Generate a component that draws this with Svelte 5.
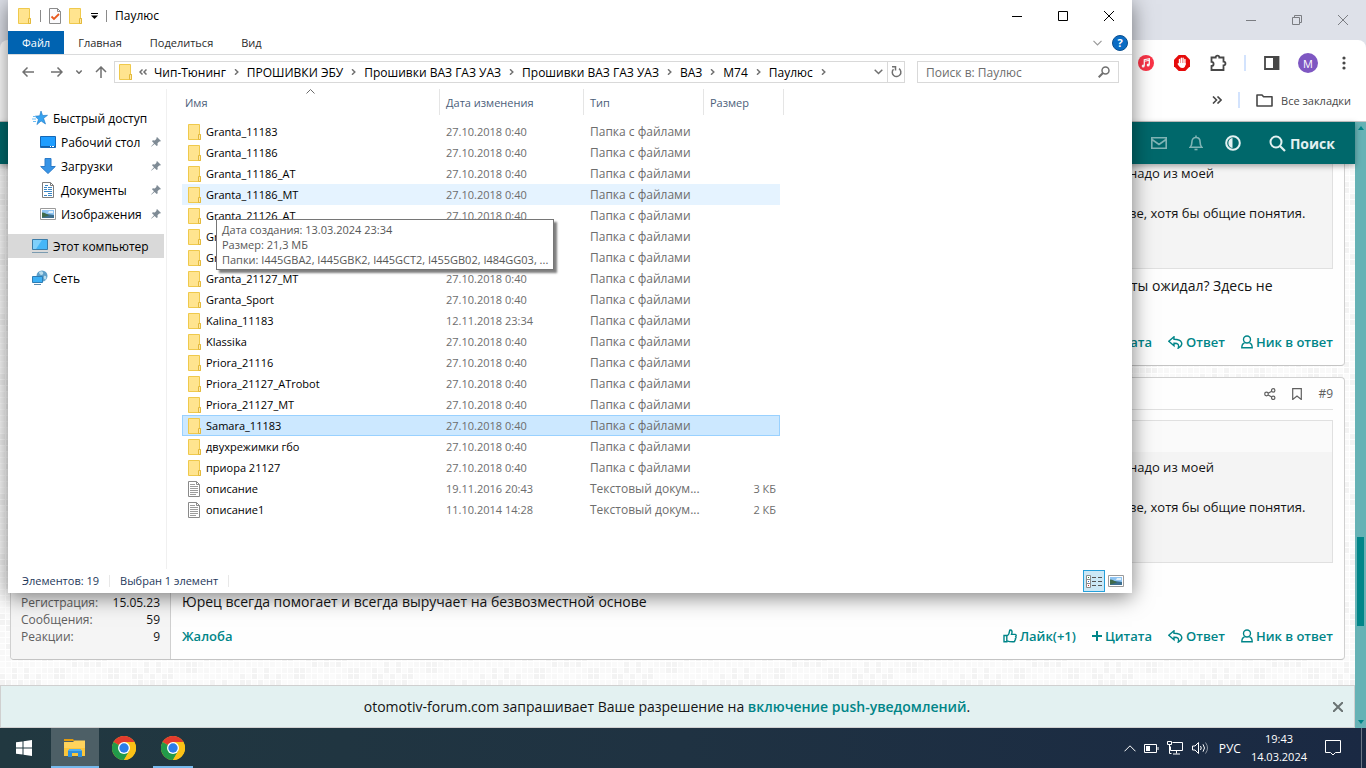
<script lang="ts">
	type Entry = { name: string; date: string; kind?: string; size?: string };

	const crumbs = ['Чип-Тюнинг', 'ПРОШИВКИ ЭБУ', 'Прошивки ВАЗ ГАЗ УАЗ', 'Прошивки ВАЗ ГАЗ УАЗ', 'ВАЗ', 'М74', 'Паулюс'];

	const places = [
		{ label: 'Рабочий стол', icon: 'desktop' },
		{ label: 'Загрузки', icon: 'download' },
		{ label: 'Документы', icon: 'document' },
		{ label: 'Изображения', icon: 'picture' }
	];

	const folders = [
		'Granta_11183',
		'Granta_11186',
		'Granta_11186_AT',
		'Granta_11186_MT',
		'Granta_21126_AT',
		'Granta_21126_MT',
		'Granta_21127_AT',
		'Granta_21127_MT',
		'Granta_Sport',
		'Kalina_11183',
		'Klassika',
		'Priora_21116',
		'Priora_21127_ATrobot',
		'Priora_21127_MT',
		'Samara_11183',
		'двухрежимки гбо',
		'приора 21127'
	];

	const entries: Entry[] = [
		...folders.map((name) => ({
			name,
			date: name === 'Kalina_11183' ? '12.11.2018 23:34' : '27.10.2018 0:40'
		})),
		{ name: 'описание', date: '19.11.2016 20:43', kind: 'Текстовый докум...', size: '3 КБ' },
		{ name: 'описание1', date: '11.10.2014 14:28', kind: 'Текстовый докум...', size: '2 КБ' }
	];

	let hovered = 'Granta_11186_MT';
	let selected = 'Samara_11183';

	// mosaic squares of the forum background
	const tiles: { x: number; y: number; fill: string }[] = [];
	const shades = ['#fafafa', '#f4f4f4', '#fbfbfb', '#f8f8f8', '#f3f3f3', '#fafafa', '#f9f9f9'];
	for (let row = 0; row < 10; row++) {
		for (let col = 0; col < 40; col++) {
			const n = (row * 17 + col * 31 + row * col * 7 + ((col * col) % 11)) % shades.length;
			tiles.push({ x: col * 6, y: row * 6, fill: shades[n] });
		}
	}
</script>

{#snippet folder()}
	<svg class="folder" width="14" height="16" viewBox="0 0 14 16" aria-hidden="true">
		<path d="M.5.5h11v10h1v5H.5z" fill="#ffe48f" stroke="#efc94c" />
		<path d="M10.5 15.5v-5h2v5z" fill="#ffe9a6" stroke="#e3b93c" />
	</svg>
{/snippet}

{#snippet textFile()}
	<svg class="folder" width="14" height="16" viewBox="0 0 14 16" aria-hidden="true">
		<path d="M.5.5h8l3 3v12H.5z" fill="#fff" stroke="#8a8a8a" />
		<path d="M8.500.5v3h3" fill="none" stroke="#8a8a8a" />
		<path d="M2 3.500h5M2 5.500h8M2 7.500h8M2 9.500h8M2 11.500h8M2 13.500h6" stroke="#9c9c9c" />
	</svg>
{/snippet}

{#snippet photo()}
	<svg width="16" height="12" viewBox="0 0 16 12" aria-hidden="true">
		<path d="M.5.5h15v11H.5z" fill="#fff" stroke="#9a9a9a" />
		<path d="M2 2h12v8H2z" fill="#8fc4f2" />
		<path d="M2 5l5 1 7 1v3H2z" fill="#3d6f8f" />
		<path d="M2 4.500c3 0 5 2 7 3l-7 2z" fill="#3f6b4b" />
		<path d="M9 3h4v2H8z" fill="#dff0fb" />
	</svg>
{/snippet}

{#snippet chrome()}
	<svg width="24" height="24" viewBox="0 0 24 24" aria-hidden="true">
		<circle cx="12" cy="12" r="12" fill="#fbc116" />
		<path d="M12 12L1.600 6A12 12 0 0 1 22.400 6z" fill="#e33b2e" />
		<path d="M1.600 6A12 12 0 0 0 12 24l5.200-9L12 12z" fill="#229a4a" />
		<path d="M12 6h10.400A12 12 0 0 1 12 24l5.200-9z" fill="#fbc116" />
		<circle cx="12" cy="12" r="6" fill="#fff" />
		<circle cx="12" cy="12" r="4.700" fill="#2b7de9" />
	</svg>
{/snippet}

{#snippet closeGlyph()}
	<svg width="10" height="10" viewBox="0 0 10 10" aria-hidden="true"><path d="M0 0l10 10M10 0L0 10" /></svg>
{/snippet}

{#snippet reply()}
	<svg width="15" height="13" viewBox="0 0 15 13" aria-hidden="true">
		<path d="M6 .8L.8 5.300 6 9.800V7.300c3.800-.1 5.400.8 4.200 4.900 3.200-1.800 4-4 3.300-5.800C12.600 4.200 10 3.400 6 3.300z" />
	</svg>
{/snippet}

{#snippet person()}
	<svg width="12" height="14" viewBox="0 0 12 14" aria-hidden="true">
		<circle cx="6" cy="4.500" r="3.500" />
		<path d="M3.500 8C1.500 8.600.8 10 .8 12.800h10.400C11.200 10 10.500 8.600 8.500 8" />
	</svg>
{/snippet}

{#snippet post(number: string, line1: string, line2: string)}
	<article class="post">
		<dl class="author">
			{#if number}
				<div><dt>Регистрация:</dt><dd>15.05.23</dd></div>
				<div><dt>Сообщения:</dt><dd>59</dd></div>
				<div><dt>Реакции:</dt><dd>9</dd></div>
			{/if}
		</dl>
		<div class="message">
			{#if number}
				<header>
					<button aria-label="Поделиться">
						<svg width="12" height="12" viewBox="0 0 12 12">
							<circle cx="2.500" cy="6" r="1.800" /><circle cx="9.200" cy="2.400" r="1.700" /><circle cx="9.200" cy="9.800" r="1.700" />
							<path d="M4.200 5.200l3.500-2M4.200 6.900l3.500 2" />
						</svg>
					</button>
					<button aria-label="Закладка">
						<svg width="10" height="12" viewBox="0 0 10 12"><path d="M.7.700h8.600v10.800L5 8 .7 11.500z" /></svg>
					</button>
					<a href="#post">{number}</a>
				</header>
			{/if}
			<blockquote>
				<p>надо из моей<br /><br />ве, хотя бы общие понятия.</p>
			</blockquote>
			<div class="text">
				<p class="tail">{line1}</p>
				<p>{line2}</p>
			</div>
			<footer>
				{#if number}
					<a class="report" href="#report">Жалоба</a>
					<a href="#like">
						<svg width="14" height="14" viewBox="0 0 14 14" aria-hidden="true">
							<path d="M1 6.500h2.800v6.300H1zM3.800 7c2-1.200 2.700-3 2.900-5.800 2-.8 3 1.200 1.800 4.200h3.700c1.300.4 1.200 1.700.5 2.200.6.8.4 1.600-.3 2 .3.900 0 1.500-.6 1.800.1 1-.4 1.400-1.400 1.400-3 .1-4.500-.2-6.600-1" />
						</svg>
						Лайк(+1)
					</a>
				{/if}
				<a class="quote" href="#quote">
					<svg width="10" height="10" viewBox="0 0 10 10" aria-hidden="true"><path d="M5 0v10M0 5h10" /></svg>
					Цитата
				</a>
				<a href="#reply">{@render reply()}Ответ</a>
				<a href="#nick">{@render person()}Ник в ответ</a>
			</footer>
		</div>
	</article>
{/snippet}

<div class="screen">
	<main class="browser">
		<div class="frame">
			<button aria-label="Свернуть"><svg width="10" height="10" viewBox="0 0 10 10"><path d="M0 5.500h10" /></svg></button>
			<button aria-label="Восстановить">
				<svg width="10" height="10" viewBox="0 0 10 10"><path d="M.5 2.500h7v7h-7zM2.500 2.500v-2h7v7h-2" /></svg>
			</button>
			<button aria-label="Закрыть">{@render closeGlyph()}</button>
		</div>
		<div class="toolbar">
			<button aria-label="Музыка">
				<svg width="16" height="16" viewBox="0 0 16 16">
					<circle cx="8" cy="8" r="8" fill="#fb3447" />
					<path d="M6.300 10.800V4.700l5-1v6" fill="none" stroke="#fff" stroke-width="1.300" />
					<path d="M6.300 6.300l5-1" stroke="#fff" />
					<circle cx="5.200" cy="11" r="1.500" fill="#fff" /><circle cx="10.200" cy="10" r="1.500" fill="#fff" />
				</svg>
			</button>
			<button aria-label="Блокировка рекламы">
				<svg width="16" height="16" viewBox="0 0 16 16">
					<path d="M4.700 0h6.600L16 4.700v6.600L11.300 16H4.700L0 11.300V4.700z" fill="#e60b0b" />
					<path d="M5.500 4.500v4M7.300 3.200v5M9.100 3.200v5M10.900 4.500v5" stroke="#fff" stroke-width="1.400" stroke-linecap="round" />
					<path d="M4.800 8h6.800c.2 3-1 5-3.200 5-2.500 0-3.400-1.500-5-4.200z" fill="#fff" />
				</svg>
			</button>
			<button aria-label="Расширения">
				<svg width="18" height="18" viewBox="0 0 18 18" fill="none" stroke="#474747" stroke-width="1.800">
					<path d="M2.500 3.500h4.200c0-2.400 3.600-2.400 3.600 0h4.200v4.200c2.600 0 2.600 3.600 0 3.600v4.700h-12v-4c2.800-.2 2.800-4 0-4.200z" />
				</svg>
			</button>
			<span class="rule"></span>
			<button aria-label="Боковая панель">
				<svg width="16" height="14" viewBox="0 0 16 14">
					<path d="M1 1h13.500v12H1z" fill="#fff" stroke="#474747" stroke-width="1.800" /><path d="M9 1h6v12H9z" fill="#474747" />
				</svg>
			</button>
			<button class="avatar" aria-label="Профиль">М</button>
			<button aria-label="Меню">
				<svg width="4" height="14" viewBox="0 0 4 14" fill="#474747">
					<circle cx="2" cy="2" r="1.600" /><circle cx="2" cy="7" r="1.600" /><circle cx="2" cy="12" r="1.600" />
				</svg>
			</button>
		</div>
		<div class="bookmarks">
			<svg width="10" height="8" viewBox="0 0 10 8" fill="none" stroke="#474747" stroke-width="1.600"><path d="M1 .5L4.500 4 1 7.500M5.500.5L9 4 5.500 7.500" /></svg>
			<span class="rule"></span>
			<button>
				<svg width="17" height="13" viewBox="0 0 17 13" fill="none" stroke="#474747" stroke-width="1.600">
					<path d="M1 1h5l1.600 1.800H16V12H1z" stroke-linejoin="round" />
				</svg>
				Все закладки
			</button>
		</div>

		<div class="viewport">
			<div class="site">
				<nav>
					<a href="#mail" aria-label="Почта">
						<svg width="16" height="12" viewBox="0 0 16 12"><path d="M.8.8h14.400v10.400H.8zM1 2.500l7 5 7-5" /></svg>
					</a>
					<a href="#alerts" aria-label="Уведомления">
						<svg width="14" height="16" viewBox="0 0 14 16">
							<path d="M7 .5v2M1.200 12.200c1.500-1.500 1.700-3 1.700-5.200C2.900 4.200 4.500 2.500 7 2.500S11.100 4.200 11.100 7c0 2.200.2 3.700 1.700 5.200z" />
							<path d="M5.500 14.500h3" />
						</svg>
					</a>
					<a class="bright" href="#theme" aria-label="Тема">
						<svg width="16" height="16" viewBox="0 0 16 16"><circle cx="8" cy="8" r="6.800" stroke-width="2" /><path d="M7.500 3v10C2 12.500 2 3.500 7.500 3z" fill="#e3f1f1" stroke="none" /></svg>
					</a>
					<a class="bright find" href="#search">
						<svg width="17" height="17" viewBox="0 0 17 17"><circle cx="7" cy="7" r="5.500" stroke-width="2" /><path d="M11 11l5 5" stroke-width="2.200" /></svg>
						Поиск
					</a>
				</nav>

				<section class="topic">
					<svg class="mosaic" width="100%" height="100%" aria-hidden="true">
						<defs>
							<pattern id="mosaic" width="240" height="60" patternUnits="userSpaceOnUse">
								{#each tiles as tile}
									<rect x={tile.x} y={tile.y} width="5" height="5" fill={tile.fill} />
								{/each}
							</pattern>
						</defs>
						<rect width="100%" height="100%" fill="url(#mosaic)" />
					</svg>
					{@render post('', 'ты ожидал? Здесь не', '')}
					{@render post('#9', '', 'Юрец всегда помогает и всегда выручает на безвозместной основе')}
				</section>

				<div class="notice">
					<p>otomotiv-forum.com запрашивает Ваше разрешение на <a href="#push">включение push-уведомлений</a>.</p>
					<button aria-label="Закрыть">{@render closeGlyph()}</button>
				</div>
			</div>
			<div class="scrollbar">
				<svg width="6" height="4" viewBox="0 0 6 4"><path d="M0 4l3-4 3 4z" fill="#008588" /></svg>
				<span class="thumb"></span>
				<svg width="6" height="4" viewBox="0 0 6 4"><path d="M0 0l3 4 3-4z" fill="#008588" /></svg>
			</div>
		</div>
	</main>

	<div class="explorer">
		<div class="title">
			{@render folder()}
			<span class="bar"></span>
			<svg width="12" height="16" viewBox="0 0 12 16">
				<path d="M.5.5h8l3 3v12H.5z" fill="#fbfbfd" stroke="#8b8b8b" /><path d="M8.500.5v3h3" fill="none" stroke="#8b8b8b" />
				<path d="M2.500 8.500L5 11l5-5" fill="none" stroke="#e8591f" stroke-width="1.800" />
			</svg>
			{@render folder()}
			<svg width="7" height="6" viewBox="0 0 7 6"><path d="M0 .5h7" stroke="#000" /><path d="M0 2.500h7L3.500 6z" /></svg>
			<span class="bar"></span>
			<h1>Паулюс</h1>
			<div class="controls">
				<button aria-label="Свернуть"><svg width="10" height="10" viewBox="0 0 10 10"><path d="M0 5.500h10" /></svg></button>
				<button aria-label="Развернуть"><svg width="10" height="10" viewBox="0 0 10 10"><path d="M.5.5h9v9h-9z" /></svg></button>
				<button aria-label="Закрыть">{@render closeGlyph()}</button>
			</div>
		</div>

		<div class="ribbon">
			<button class="file">Файл</button>
			<button>Главная</button>
			<button>Поделиться</button>
			<button>Вид</button>
			<div class="help">
				<svg width="9" height="6" viewBox="0 0 9 6" fill="none" stroke="#9a9a9a" stroke-width="1.200"><path d="M.5.8l4 4 4-4" /></svg>
				<button aria-label="Справка">?</button>
			</div>
		</div>

		<div class="path">
			<div class="arrows">
				<button aria-label="Назад"><svg width="12" height="10" viewBox="0 0 12 10"><path d="M12 5H1M5.500.5L1 5l4.500 4.500" /></svg></button>
				<button aria-label="Вперед"><svg width="12" height="10" viewBox="0 0 12 10"><path d="M0 5h11M6.500.5L11 5 6.500 9.500" /></svg></button>
				<button aria-label="Последние"><svg width="6" height="4" viewBox="0 0 6 4"><path d="M.3.500L3 3.300 5.700.500" /></svg></button>
				<button aria-label="Вверх"><svg width="12" height="12" viewBox="0 0 12 12"><path d="M6 12V1M1 6l5-5 5 5" /></svg></button>
			</div>
			<div class="address">
				{@render folder()}
				<svg class="back" width="8" height="6" viewBox="0 0 8 6"><path d="M3.500.5L1 3l2.500 2.500M7.500.5L5 3l2.500 2.500" /></svg>
				{#each crumbs as crumb}
					<button>{crumb}</button>
					<svg class="sep" width="5" height="6" viewBox="0 0 5 6"><path d="M1 .3L3.800 3 1 5.700" /></svg>
				{/each}
				<button class="drop" aria-label="Предыдущие"><svg width="9" height="6" viewBox="0 0 9 6"><path d="M.7.700l3.800 3.800L8.300.7" /></svg></button>
				<button class="refresh" aria-label="Обновить">
					<svg width="11" height="12" viewBox="0 0 11 12"><path d="M8 2.700A4.300 4.300 0 1 1 2.500 3.200M1 .8h3.500v3.700" /></svg>
				</button>
			</div>
			<label class="search">
				<input type="text" placeholder="Поиск в: Паулюс" aria-label="Поиск в: Паулюс" />
				<svg width="12" height="12" viewBox="0 0 12 12"><circle cx="7.500" cy="4.500" r="3.500" /><path d="M5 7L.7 11.300" stroke-width="2" /></svg>
			</label>
		</div>

		<div class="content">
			<nav class="places">
				<a href="#quick">
					<svg width="16" height="16" viewBox="0 0 16 16">
						<path d="M9 1l1.600 4.500 4.900-.2-3.900 3 1.900 5.700-4.400-3-4.200 3.600 1.500-5L3 6.200l4.700-.4z" fill="#37a3f0" stroke="#1976c4" stroke-width=".6" />
						<path d="M1 6.500h3M0 9h4M1 11.500h3" stroke="#6cbcf3" />
					</svg>
					Быстрый доступ
				</a>
				{#each places as place}
					<a class="child" href="#{place.icon}">
						{#if place.icon === 'desktop'}
							<svg width="16" height="12" viewBox="0 0 16 12"><path d="M.5.5h15v11H.5z" fill="#1e9dff" stroke="#1567b5" /><path d="M1 10.500h14" stroke="#1660a8" /><path d="M10 10.500h1M12 10.500h2" stroke="#fff" /></svg>
						{:else if place.icon === 'download'}
							<svg width="16" height="16" viewBox="0 0 16 16"><path d="M5 .5h6v8h4.300L8 15.500.7 8.500H5z" fill="#3794e6" stroke="#2b7bc9" /></svg>
						{:else if place.icon === 'document'}
							<svg width="16" height="16" viewBox="0 0 16 16">
								<path d="M2.500.5h8l3 3v12h-11z" fill="#fff" stroke="#7d7d7d" /><path d="M10.500.5v3h3" fill="none" stroke="#7d7d7d" />
								<path d="M4 5.500h3M8 5.500h4M4 7.500h3M8 7.500h4M4 9.500h8M4 13.500h3M8 11.500h4M8 13.500h4" stroke="#3b86c4" /><path d="M5 3.500h3" stroke="#3b86c4" />
							</svg>
						{:else}
							{@render photo()}
						{/if}
						{place.label}
						<svg class="pin" width="10" height="10" viewBox="0 0 10 10">
							<path d="M6 0l4 4-1 .6-.8-.1-1.700 1.700.2 2L5.700 9 3.600 6.900.6 9.600 0 9.400 3 6.300 1 4.300l.8-1 2 .2L5.500 1.800 5.400 1z" fill="#7f8b95" />
						</svg>
					</a>
				{/each}
				<a class="group current" href="#computer">
					<svg width="16" height="15" viewBox="0 0 16 15"><path d="M.5.5h15v10H.5z" fill="#45b6f7" stroke="#3b7ca8" /><path d="M1 1h9L4 10H1z" fill="#7fd0fb" /><path d="M0 13.500h16" stroke="#7b9bb0" /></svg>
					Этот компьютер
				</a>
				<a class="group" href="#network">
					<svg width="16" height="16" viewBox="0 0 16 16">
						<circle cx="10" cy="6" r="5.500" fill="#5d9fc9" /><path d="M7 2c3-2 5 0 4 2S7 5 7 2zM12 6c2-1 3 1 2 3s-3-1-2-3z" fill="#b9dcec" />
						<path d="M.5 6.500h10v6H.5z" fill="#3cb0f5" stroke="#2e7db3" /><path d="M2 14.500h7" stroke="#5a8caf" />
					</svg>
					Сеть
				</a>
			</nav>

			<div class="files">
				<table>
					<thead>
						<tr>
							<th class="name">
								Имя
								<svg width="9" height="5" viewBox="0 0 9 5"><path d="M.5 4.500l4-4 4 4" fill="none" stroke="#6b6b6b" /></svg>
							</th>
							<th class="date">Дата изменения</th>
							<th class="kind">Тип</th>
							<th class="size">Размер</th>
						</tr>
					</thead>
					<tbody>
						{#each entries as entry}
							<tr class:hovered={entry.name === hovered} class:selected={entry.name === selected}>
								<td>
									<div class="cell">
										{#if entry.kind}{@render textFile()}{:else}{@render folder()}{/if}
										{entry.name}
									</div>
								</td>
								<td>{entry.date}</td>
								<td class="type">{entry.kind ?? 'Папка с файлами'}</td>
								<td>{entry.size ?? ''}</td>
							</tr>
						{/each}
					</tbody>
				</table>
				<div class="tooltip" role="tooltip">
					Дата создания: 13.03.2024 23:34<br />
					Размер: 21,3 МБ<br />
					Папки: I445GBA2, I445GBK2, I445GCT2, I455GB02, I484GG03, ...
				</div>
			</div>
		</div>

		<div class="status">
			<span>Элементов: 19</span>
			<span>Выбран 1 элемент</span>
			<div class="views">
				<button class="on" aria-label="Таблица">
					<svg width="16" height="13" viewBox="0 0 16 13" fill="none" stroke="#8a8a8a">
						<path d="M.5.5h4v12h-4zM.5 4.500h4M.5 8.500h4" fill="#fff" /><path d="M6 2.500h4M12 2.500h4M6 6.500h4M12 6.500h4M6 10.500h4M12 10.500h4" stroke="#555" />
						<path d="M2 2.500h1" stroke="#2a8a3c" /><path d="M2 6.500h1" stroke="#2a6fd0" /><path d="M2 10.500h1" stroke="#d02a2a" />
					</svg>
				</button>
				<button aria-label="Эскизы">{@render photo()}</button>
			</div>
		</div>
	</div>

	<div class="taskbar">
		<button class="start" aria-label="Пуск">
			<svg width="16" height="16" viewBox="0 0 16 16" fill="#fff"><path d="M0 2.300L6.500 1.400v6.100H0zM7.500 1.200L16 0v7.500H7.500zM0 8.500h6.500v6.100L0 13.700zM7.500 8.500H16V16l-8.500-1.200z" /></svg>
		</button>
		<button class="app active" aria-label="Проводник">
			<svg width="22" height="18" viewBox="0 0 22 18">
				<path d="M0 0h9l1.500 2H0z" fill="#e39b0c" /><path d="M0 3h9l1.500-1.500H21V17H0z" fill="#ffd35c" /><path d="M0 9h21v8H0z" fill="#fcc63a" />
				<path d="M4 18v-6l1.500-2h10.500l2 2v6h-4v-4H8v4z" fill="#2f8fdc" /><path d="M4 12h14l-2-2H5.500z" fill="#52b0f0" />
			</svg>
		</button>
		<button class="app" aria-label="Chrome">{@render chrome()}</button>
		<button class="app open" aria-label="Chrome">{@render chrome()}</button>
		<div class="tray">
			<svg width="12" height="7" viewBox="0 0 12 7"><path d="M.5 6.300L6 .8l5.500 5.500" /></svg>
			<svg width="15" height="9" viewBox="0 0 15 9"><path d="M.5.5h12v8H.5zM14 3v3" /><path d="M2 2h4v5H2z" fill="#fff" stroke="none" /></svg>
			<svg width="17" height="14" viewBox="0 0 17 14"><path d="M5.500 1.500h10v8h-12v-4M9.500 9.500v3M6 13h7M.5.5h4v3h-4zM2.500 3.500v9h2" /></svg>
			<svg width="17" height="14" viewBox="0 0 17 14"><path d="M.5 5h2.500l3.500-3.500v11L3 9H.500zM8.500 5q1.500 2 0 4M11 3.300q3 3.700 0 7.400" /><path d="M13.500 1.500q4 5.500 0 11" opacity=".5" /></svg>
			<span class="lang">РУС</span>
			<time>19:43<br />14.03.2024</time>
			<button aria-label="Уведомления">
				<svg width="16" height="16" viewBox="0 0 16 16"><path d="M.5.500h15v12h-5L8 15l-2.500-2.500h-5z" /></svg>
			</button>
		</div>
	</div>
</div>

<style>
	:global(body) {
		margin: 0;
	}
	.screen {
		position: relative;
		display: flex;
		flex-direction: column;
		height: 100vh;
		overflow: hidden;
		font-family: 'Open Sans', 'Noto Sans', sans-serif;
		font-size: 12px;
		color: #000;
	}
	button {
		display: flex;
		align-items: center;
		justify-content: center;
		margin: 0;
		padding: 0;
		border: 0;
		background: none;
		font: inherit;
		color: inherit;
	}
	a {
		color: inherit;
		text-decoration: none;
	}
	p,
	dl,
	dd,
	blockquote,
	h1 {
		margin: 0;
	}
	svg {
		flex-shrink: 0;
	}

	/* browser */
	.browser {
		flex: 1;
		min-height: 0;
		display: flex;
		flex-direction: column;
		background: #dee1e9;
	}
	.frame {
		display: flex;
		justify-content: flex-end;
		height: 40px;
	}
	.frame button {
		width: 46px;
		fill: none;
		stroke: #7b7d82;
	}
	.toolbar {
		display: flex;
		align-items: center;
		justify-content: flex-end;
		gap: 12px;
		height: 46px;
		padding-right: 10px;
		background: #fff;
		border-radius: 8px 8px 0 0;
	}
	.toolbar button {
		width: 24px;
		height: 24px;
	}
	.rule {
		width: 2px;
		height: 16px;
		margin: 0 2px;
		background: #d3e3fd;
	}
	.toolbar .avatar {
		width: 20px;
		height: 20px;
		margin: 0 2px;
		border-radius: 50%;
		background: #7e57c2;
		color: #fff;
		font-size: 11px;
	}
	.bookmarks {
		display: flex;
		align-items: center;
		justify-content: flex-end;
		gap: 14px;
		height: 28px;
		padding: 0 15px 7px 0;
		border-bottom: 1px solid #c8c8c8;
		background: #fff;
		color: #474747;
		font-size: 11px;
	}
	.bookmarks button {
		gap: 8px;
	}
	.viewport {
		flex: 1;
		min-height: 0;
		display: flex;
		background: #fff;
	}
	.scrollbar {
		display: flex;
		flex-direction: column;
		align-items: center;
		width: 11px;
		padding: 4px 0;
		box-sizing: border-box;
		background: #66b2b5;
	}
	.thumb {
		width: 7px;
		height: 89px;
		margin: auto 0 94px;
		background: #008588;
	}

	/* forum */
	.site {
		flex: 1;
		min-width: 0;
		display: flex;
		flex-direction: column;
		font-size: 14px;
		color: #141414;
	}
	.site nav {
		position: relative;
		z-index: 1;
		display: flex;
		align-items: center;
		justify-content: flex-end;
		gap: 22px;
		height: 42px;
		padding-right: 20px;
		background: #00686b;
		box-shadow: 0 2px 6px rgba(0, 0, 0, 0.35);
		fill: none;
		stroke: #80b4b5;
		stroke-width: 1.6;
	}
	.site nav a {
		display: flex;
		align-items: center;
	}
	.site nav .bright {
		stroke: #e3f1f1;
	}
	.find {
		gap: 4px;
		margin-left: 6px;
		font-weight: bold;
		color: #e3f1f1;
	}
	.topic {
		position: relative;
		flex: 1;
		min-height: 0;
		display: flex;
		flex-direction: column;
		justify-content: flex-end;
		gap: 11px;
		padding: 0 10px 25px;
		overflow: hidden;
	}
	.mosaic {
		position: absolute;
		inset: 0;
	}
	.post {
		position: relative;
		flex-shrink: 0;
		display: flex;
		border: 1px solid #d0d0d0;
		border-bottom-color: #c4c4c4;
		border-radius: 4px;
		background: #fefefe;
	}
	.author {
		display: flex;
		flex-direction: column;
		justify-content: flex-end;
		width: 139px;
		padding: 0 10px 14px;
		border-right: 1px solid #d0d0d0;
		border-radius: 4px 0 0 4px;
		background: #f5f5f5;
		font-size: 12px;
		line-height: 17px;
	}
	.author div {
		display: flex;
		justify-content: space-between;
	}
	.author dt {
		color: #606060;
	}
	.message {
		flex: 1;
		padding: 0 11px 12px;
	}
	.message header {
		display: flex;
		align-items: center;
		justify-content: flex-end;
		gap: 16px;
		height: 31px;
		border-bottom: 1px solid #e0e0e0;
		font-size: 12px;
		color: #606060;
		fill: none;
		stroke: #606060;
		stroke-width: 1.2;
	}
	blockquote {
		margin-top: 10px;
		padding-bottom: 45px;
		border: 1px solid #e0e0e0;
		background: #f4f4f4;
		font-size: 13px;
		line-height: 20px;
	}
	blockquote::before {
		content: '';
		display: block;
		height: 31px;
		margin-bottom: 5px;
		background: #fafafa;
	}
	blockquote p {
		width: 203px;
		margin-left: auto;
		white-space: nowrap;
	}
	.text {
		margin-top: 6px;
		line-height: 22px;
	}
	.text p {
		height: 22px;
	}
	.text .tail {
		width: 202px;
		margin-left: auto;
		white-space: nowrap;
	}
	.message footer {
		display: flex;
		align-items: center;
		justify-content: flex-end;
		gap: 16px;
		margin-top: 12px;
		line-height: 22px;
		font-size: 13px;
		font-weight: 600;
		color: #008588;
	}
	.message footer a {
		display: flex;
		align-items: center;
		gap: 3px;
		fill: none;
		stroke: #008588;
		stroke-width: 1.4;
	}
	.message footer .report {
		margin-right: auto;
	}
	.message footer .quote {
		stroke-width: 2;
	}
	.notice {
		display: flex;
		align-items: center;
		height: 41px;
		border: 1px solid #d0d0d0;
		background: #e3f1f1;
	}
	.notice p {
		flex: 1;
		text-align: center;
	}
	.notice a {
		font-weight: 600;
		color: #008588;
	}
	.notice button {
		margin-right: 11px;
		stroke: #6a7373;
		stroke-width: 2;
	}

	/* explorer */
	.explorer {
		position: absolute;
		z-index: 2;
		inset: 0 234px 175px 8px;
		display: flex;
		flex-direction: column;
		background: #fff;
		box-shadow: 0 4px 20px rgba(0, 0, 0, 0.5);
		white-space: nowrap;
	}
	.title {
		display: flex;
		align-items: center;
		gap: 8px;
		height: 31px;
		padding-left: 10px;
	}
	.bar {
		width: 1px;
		height: 12px;
		background: #8a8a8a;
	}
	.title h1 {
		font-size: 12px;
		font-weight: normal;
	}
	.controls {
		display: flex;
		margin-left: auto;
		height: 100%;
	}
	.controls button {
		width: 46px;
		fill: none;
		stroke: #000;
	}
	.ribbon {
		display: flex;
		height: 23px;
		border-bottom: 1px solid #dadbdc;
		color: #2b2b2b;
		font-size: 11px;
	}
	.ribbon > button {
		padding: 0 14px;
	}
	.ribbon .file {
		background: #0063b1;
		color: #fff;
	}
	.help {
		display: flex;
		align-items: center;
		gap: 10px;
		margin-left: auto;
		padding-right: 4px;
	}
	.help button {
		width: 16px;
		height: 16px;
		box-sizing: border-box;
		border: 1px solid #0a4f8f;
		border-radius: 50%;
		background: #0a6cc4;
		color: #fff;
		font-weight: bold;
	}
	.path {
		display: flex;
		align-items: center;
		gap: 12px;
		height: 34px;
		padding: 0 13px 0 14px;
	}
	.path svg {
		fill: none;
		stroke: #707070;
		stroke-width: 1.5;
	}
	.path .folder {
		stroke-width: 1;
	}
	.arrows {
		display: flex;
		align-items: center;
		gap: 13px;
		width: 80px;
	}
	.arrows button:first-child {
		margin-right: 4px;
	}
	.address,
	.search {
		display: flex;
		align-items: center;
		height: 20px;
		border: 1px solid #d9d9d9;
	}
	.address {
		flex: 1;
		padding-left: 4px;
	}
	.address .back {
		margin: 0 7px 0 6px;
	}
	.sep {
		margin: 0 8px;
	}
	.drop {
		margin-left: auto;
		padding-right: 4px;
	}
	.address .refresh {
		width: 17px;
		height: 100%;
		border-left: 1px solid #d9d9d9;
	}
	.search {
		width: 184px;
		padding: 0 8px;
	}
	.search input {
		flex: 1;
		min-width: 0;
		padding: 0;
		border: 0;
		outline: none;
		background: none;
		font: inherit;
	}
	.search input::placeholder {
		color: #6d6d6d;
		opacity: 1;
	}
	.content {
		flex: 1;
		min-height: 0;
		display: flex;
	}
	.places {
		width: 158px;
		padding-top: 17px;
		box-sizing: border-box;
	}
	.places a {
		display: flex;
		align-items: center;
		gap: 5px;
		height: 24px;
		margin-right: 2px;
		padding: 0 3px 0 24px;
	}
	.places .child {
		padding-left: 32px;
	}
	.places .group {
		margin-top: 8px;
	}
	.places .current {
		background: #d9d9d9;
	}
	.places .pin {
		margin-left: auto;
	}
	.files {
		position: relative;
		flex: 1;
		padding-left: 15px;
		border-left: 1px solid #f0f0f0;
		font-size: 11px;
	}
	table {
		border-spacing: 0;
		table-layout: fixed;
		width: 602px;
	}
	th {
		position: relative;
		height: 26px;
		padding: 0 6px;
		box-sizing: border-box;
		border-right: 1px solid #e5e5e5;
		font-weight: normal;
		text-align: left;
		color: #4c607a;
	}
	th.name {
		width: 258px;
		padding-left: 3px;
	}
	th.name svg {
		position: absolute;
		top: 0;
		left: calc(50% - 5px);
	}
	th.date {
		width: 144px;
	}
	th.kind {
		width: 120px;
	}
	th.size {
		width: 80px;
	}
	tbody::before {
		content: '';
		display: block;
		height: 6px;
	}
	td {
		height: 21px;
		padding: 0 6px;
		color: #6d6d6d;
	}
	td.type {
		font-size: 12px;
	}
	td:first-child {
		color: #000;
	}
	td:last-child {
		padding-right: 4px;
		border-right: 4px solid transparent;
		background-clip: padding-box;
		text-align: right;
	}
	.cell {
		display: flex;
		align-items: center;
		gap: 4px;
		height: 21px;
	}
	.hovered td {
		background-color: #e5f3ff;
	}
	.selected td {
		background-color: #cce8ff;
		box-shadow: inset 0 1px #99d1ff, inset 0 -1px #99d1ff;
	}
	.selected td:first-child {
		box-shadow: inset 0 1px #99d1ff, inset 0 -1px #99d1ff, inset 1px 0 #99d1ff;
	}
	.selected td:last-child {
		box-shadow: inset 0 1px #99d1ff, inset 0 -1px #99d1ff, inset -1px 0 #99d1ff;
	}
	.tooltip {
		position: absolute;
		top: 130px;
		left: 49px;
		padding: 2px 5px;
		border: 1px solid #767676;
		background: #fff;
		box-shadow: 3px 3px 2px rgba(0, 0, 0, 0.5);
		line-height: 15px;
		color: #575757;
	}
	.status {
		display: flex;
		align-items: center;
		height: 24px;
		padding-left: 4px;
		font-size: 11px;
		color: #1e395b;
	}
	.status span {
		padding: 0 10px;
		border-right: 1px solid #e8e8e8;
		line-height: 12px;
	}
	.views {
		display: flex;
		align-items: center;
		margin-left: auto;
		padding-right: 5px;
	}
	.views button {
		width: 22px;
		height: 22px;
	}
	.views .on {
		box-sizing: border-box;
		border: 1px solid #26a0da;
		background: #cbe8f6;
	}

	/* taskbar */
	.taskbar {
		display: flex;
		height: 40px;
		background: linear-gradient(90deg, #213840, #1f3242 50%, #1a2943);
		color: #fff;
	}
	.taskbar .start {
		width: 48px;
		margin-right: 3px;
	}
	.app {
		position: relative;
		width: 48px;
		margin-right: 1px;
	}
	.active {
		background: #4d5f66;
	}
	.active::after,
	.open::after {
		content: '';
		position: absolute;
		inset: auto 0 0;
		height: 2px;
		background: #76b9ed;
	}
	.open::after {
		inset: auto 4px 0;
	}
	.tray {
		display: flex;
		align-items: center;
		gap: 8px;
		margin: 0 4px 0 auto;
		padding-right: 20px;
		border-right: 1px solid #6b7686;
		fill: none;
		stroke: #fff;
	}
	.lang {
		margin: 0 2px;
	}
	time {
		text-align: center;
		font-size: 11px;
		line-height: 18px;
	}
	.tray button {
		margin-left: 10px;
	}
</style>
